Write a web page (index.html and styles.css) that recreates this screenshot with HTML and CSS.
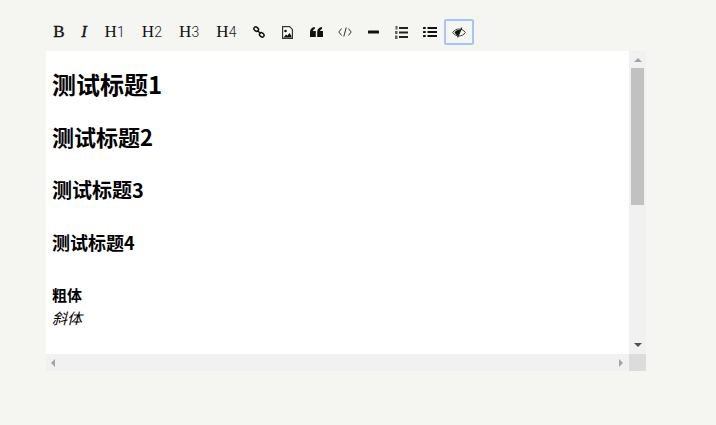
FILE: index.html
```html
<!DOCTYPE html>
<html lang="zh">
<head>
<meta charset="utf-8">
<title>编辑器</title>
<link rel="stylesheet" href="styles.css">
</head>
<body>
<div class="wrap">
  <div class="toolbar">
    <button class="btn txt b">B</button>
    <button class="btn txt i">I</button>
    <button class="btn txt h">H<small>1</small></button>
    <button class="btn txt h">H<small>2</small></button>
    <button class="btn txt h">H<small>3</small></button>
    <button class="btn txt h">H<small>4</small></button>
    <button class="btn ico"><svg viewBox="0 0 13 13" width="12" height="12"><g fill="none" stroke="#111" stroke-width="1.6"><rect x=".9" y="1.400" width="5.200" height="4" rx="2" transform="rotate(40 3.500 3.400)"/><rect x="6.900" y="7.600" width="5.200" height="4" rx="2" transform="rotate(40 9.500 9.600)"/><path d="M4.800 4.800l3.400 3.400"/></g></svg></button>
    <button class="btn ico"><svg viewBox="0 0 11 13" width="11" height="13"><path d="M.6.6h7l2.800 2.800v9H.6z" fill="#fff" stroke="#333" stroke-width="1.200"/><circle cx="3.500" cy="5" r="1.300" fill="#111"/><path d="M1.500 11.500l2.500-3 1.400 1.200 2-2.700 2 2.700v1.800z" fill="#111"/></svg></button>
    <button class="btn ico"><svg viewBox="0 0 13 10" width="13" height="10"><path d="M0 5.200C0 2.200 1.500.5 4.800 0v2C3.700 2.300 3.100 3 3 4h2.800v6H0zM7.200 5.200C7.200 2.200 8.700.5 12 0v2c-1.100.3-1.700 1-1.800 2H13v6H7.200z" fill="#111"/></svg></button>
    <button class="btn ico"><svg viewBox="0 0 14 10" width="14" height="10"><path d="M3.600 1.500L.8 5l2.800 3.500M10.400 1.500L13.200 5l-2.800 3.500M8.200.5L5.800 9.500" fill="none" stroke="#333" stroke-width="1"/></svg></button>
    <button class="btn ico"><svg viewBox="0 0 11 4" width="11" height="4"><rect width="11" height="3" y=".5" rx=".6" fill="#111"/></svg></button>
    <button class="btn ico"><svg viewBox="0 0 13 13" width="13" height="13"><g fill="#222"><rect x="4" y="1" width="9" height="2"/><rect x="4" y="5.500" width="9" height="2"/><rect x="4" y="10" width="9" height="2"/><rect x=".500" y="0" width="2" height="3.500" opacity=".7"/><rect x="0" y="5" width="2.500" height="3" opacity=".7"/><rect x="0" y="9.500" width="2.500" height="3.500" opacity=".7"/></g></svg></button>
    <button class="btn ico"><svg viewBox="0 0 14 10" width="14" height="10"><g fill="#111"><rect x="4.500" y="0" width="9.500" height="2"/><rect x="4.500" y="4" width="9.500" height="2"/><rect x="4.500" y="8" width="9.500" height="2"/><rect y="0" width="2.800" height="2" rx=".6"/><rect y="4" width="2.800" height="2" rx=".6"/><rect y="8" width="2.800" height="2" rx=".6"/></g></svg></button>
    <button class="btn ico active"><svg viewBox="0 0 14 11" width="14" height="11"><path d="M.6 5.500C2.300 3.200 4.500 2 7 2s4.700 1.200 6.400 3.500C11.700 7.800 9.500 9 7 9S2.300 7.800.6 5.500z" fill="none" stroke="#333" stroke-width=".9"/><path d="M2.500 5.300C4 3.300 6 2.600 8.700 2.800L6 8.800C4.500 8.200 3.500 7 2.500 5.300z" fill="#111"/><path d="M9.800.6L5.600 10.400" stroke="#111" stroke-width="1.100"/></svg></button>
  </div>
  <div class="editor">
    <div class="main">
      <div class="content">
        <h1>测试标题1</h1>
        <h2>测试标题2</h2>
        <h3>测试标题3</h3>
        <h4>测试标题4</h4>
        <p class="bold">粗体</p>
        <p class="ital">斜体</p>
      </div>
      <div class="vbar">
        <span class="arrow up"></span>
        <div class="vthumb"></div>
        <div class="grow"></div>
        <span class="arrow down"></span>
      </div>
    </div>
    <div class="bottom">
      <div class="hbar">
        <span class="arrow left"></span>
        <span class="arrow right"></span>
      </div>
      <div class="corner"></div>
    </div>
  </div>
</div>
</body>
</html>
```

FILE: styles.css
```css
* { box-sizing: border-box; }
html, body { margin: 0; height: 100%; }
body { background: #f5f5f1; overflow: hidden; }
.wrap { width: 600px; margin-left: 46px; padding-top: 19px; }
.toolbar { display: flex; align-items: center; height: 32px; padding-bottom: 6px; }
.btn { display: flex; align-items: center; justify-content: center; height: 26px; padding: 0; border: 2px solid transparent; background: none; color: #111; }
.txt { font-family: "Liberation Serif", serif; font-size: 17px; }
.b { width: 26px; -webkit-text-stroke: .35px #111; }
.i { width: 24px; font-style: italic; -webkit-text-stroke: .35px #111; }
.h { width: 37.250px; }
.h small { font-size: 14px; font-family: Roboto, sans-serif; font-weight: 300; color: #222; }
.ico { width: 28.500px; }
.active { width: 30px; margin-left: -.5px; border-color: #a6c5f7; border-radius: 2px; }
.editor { display: flex; flex-direction: column; height: 320px; }
.main { display: flex; height: 303px; }
.content { flex: 1; background: #fff; padding: 0 6px; overflow: hidden; font-family: "Noto Sans CJK SC", "Noto Sans", sans-serif; color: #000; }
h1, h2, h3, h4, p { margin: 0; }
h1 { font-size: 24px; line-height: 34px; margin-top: 16px; }
h2 { font-size: 22px; line-height: 32px; margin-top: 19px; }
h3 { font-size: 20px; line-height: 30px; margin-top: 23px; }
h4 { font-size: 18px; line-height: 26px; margin-top: 24px; }
.bold { font-size: 15px; font-weight: bold; line-height: 22px; margin-top: 29px; }
.ital { font-size: 15px; font-style: italic; line-height: 22px; margin-top: 1px; }
.vbar { width: 17px; background: #f1f1f1; display: flex; flex-direction: column; align-items: center; padding: 0 2px; }
.vthumb { width: 13px; height: 137px; background: #c1c1c1; }
.grow { flex: 1; }
.arrow { display: block; width: 0; height: 0; border-style: solid; border-color: transparent; }
.up { border-width: 0 4px 4px; border-bottom-color: #a3a3a3; margin: 7px 0 6px; }
.down { border-width: 4px 4px 0; border-top-color: #505050; margin: 6px 0 7px; }
.bottom { display: flex; height: 17px; }
.hbar { flex: 1; background: #f1f1f1; display: flex; align-items: center; justify-content: space-between; padding: 0 6px 0 5px; }
.left { border-width: 4px 4px 4px 0; border-right-color: #a3a3a3; }
.right { border-width: 4px 0 4px 4px; border-left-color: #a3a3a3; }
.corner { width: 17px; background: #dcdcdc; }
```
